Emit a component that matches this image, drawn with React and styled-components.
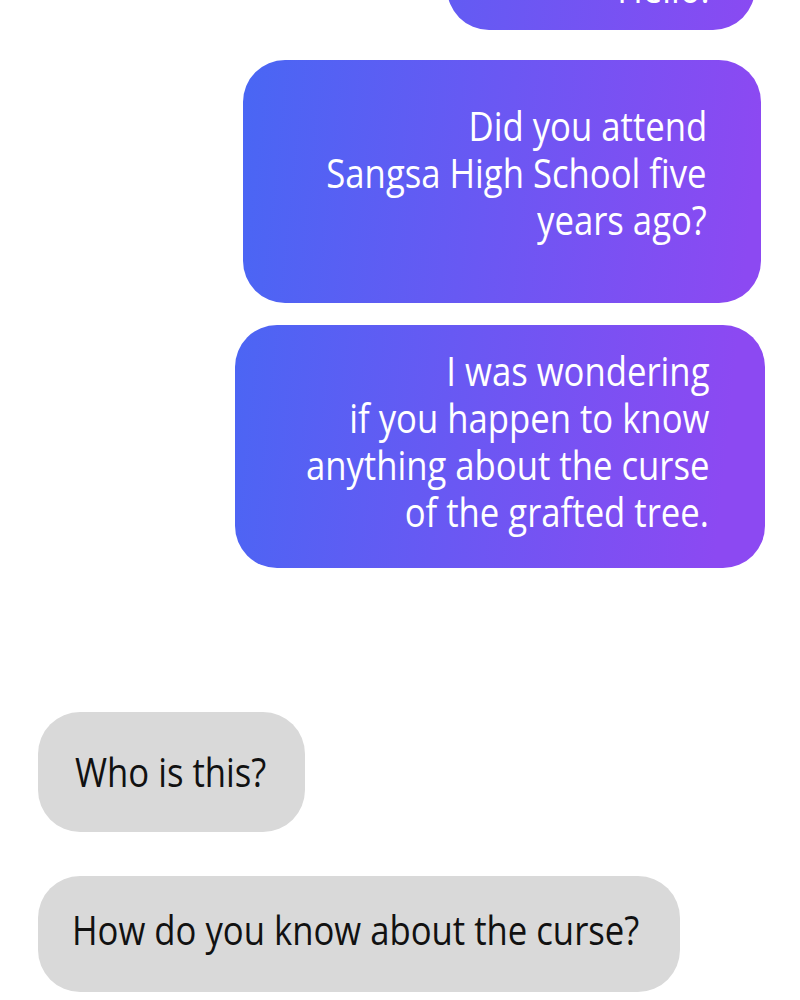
import React from 'react';
import styled, { createGlobalStyle } from 'styled-components';

const GlobalStyle = createGlobalStyle`
    html, body {
        margin: 0;
        padding: 0;
        background: #ffffff;
    }
    body {
        font-family: "Open Sans", "Liberation Sans", sans-serif;
        overflow: hidden;
    }
`;

// 대화 전체
const Chat = styled.div`
    width: 800px;
    height: 1000px;
    overflow: hidden;
    display: flex;
    flex-direction: column;
`;

// 말풍선 공통
const Bubble = styled.div`
    box-sizing: border-box;
    display: flex;
    flex-direction: column;
    width: ${(p) => p.$width}px;
    height: ${(p) => p.$height}px;
    margin-top: ${(p) => p.$top}px;
    padding-top: ${(p) => p.$padTop}px;
    border-radius: 42px;
    font-size: 40px;
    line-height: 47px;
    font-stretch: normal;
    white-space: nowrap;
`;

// 보낸 메시지 (오른쪽, 그라데이션)
const Sent = styled(Bubble)`
    align-self: flex-end;
    align-items: flex-end;
    margin-right: ${(p) => p.$right}px;
    padding-right: ${(p) => p.$padRight}px;
    color: #ffffff;
    background: linear-gradient(96deg, #4767f4 235px, #8c49f2 770px);
    background-attachment: fixed;
`;

// 받은 메시지 (왼쪽, 회색)
const Received = styled(Bubble)`
    align-self: flex-start;
    align-items: flex-start;
    margin-left: 38px;
    padding-left: ${(p) => p.$padLeft}px;
    color: #111111;
    background: #d9d9d9;
`;

// 한 줄 (웹툰 글씨처럼 가로로 눌림)
const Line = styled.span`
    display: block;
    transform: scaleX(0.867);
    transform-origin: ${(p) => (p.$left ? 'left' : 'right')} center;
`;

const App = () => {
    return (
        <>
            <GlobalStyle />
            <Chat>
                <Sent $width={308} $height={120} $top={-90} $right={45} $padRight={45} $padTop={54}>
                    <Line>Hello!</Line>
                </Sent>
                <Sent $width={518} $height={243} $top={30} $right={39} $padRight={54} $padTop={42}>
                    <Line>Did you attend</Line>
                    <Line>Sangsa High School five</Line>
                    <Line>years ago?</Line>
                </Sent>
                <Sent $width={530} $height={243} $top={22} $right={35} $padRight={56} $padTop={22}>
                    <Line>I was wondering</Line>
                    <Line>if you happen to know</Line>
                    <Line>anything about the curse</Line>
                    <Line>of the grafted tree.</Line>
                </Sent>
                <Received $width={267} $height={120} $top={144} $padLeft={37} $padTop={36}>
                    <Line $left>Who is this?</Line>
                </Received>
                <Received $width={642} $height={116} $top={44} $padLeft={34} $padTop={30}>
                    <Line $left>How do you know about the curse?</Line>
                </Received>
            </Chat>
        </>
    );
};

export default App;
